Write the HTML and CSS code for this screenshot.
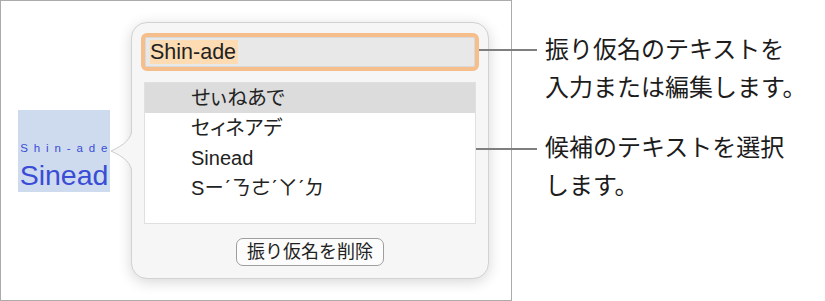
FILE: index.html
```html
<!DOCTYPE html>
<html lang="ja">
<head>
    <meta charset="UTF-8">
    <meta name="viewport" content="width=device-width, initial-scale=1.0">
    <title>振り仮名</title>
    <link rel="stylesheet" href="styles.css">
</head>
<body>
    <div class="page">
        <div class="doc">
            <div class="word">
                <span class="ruby">Shin-ade</span>
                <span class="base">Sinead</span>
            </div>
            <div class="popover">
                <svg class="arrow" width="22" height="46" viewBox="0 0 22 46">
                    <path d="M22 0 C22 11 14 17 1 23 C14 29 22 35 22 46 Z" fill="#f6f6f6"/>
                    <path d="M22 0 C22 11 14 17 1 23 C14 29 22 35 22 46" fill="none" stroke="#cdcdcd" stroke-width="1"/>
                </svg>
                <div class="field"><span class="sel">Shin-ade</span></div>
                <ul class="list">
                    <li class="active">せぃねあで</li>
                    <li>セィネアデ</li>
                    <li>Sinead</li>
                    <li>Sㄧˊㄋㄜˊㄚˊㄉ</li>
                </ul>
                <div class="actions">
                    <button>振り仮名を削除</button>
                </div>
            </div>
        </div>
        <div class="notes">
            <p>振り仮名のテキストを<br>入力または編集します。</p>
            <p>候補のテキストを選択<br>します。</p>
        </div>
        <div class="line line-1"></div>
        <div class="line line-2"></div>
    </div>
</body>
</html>
```

FILE: styles.css
```css
body {
    margin: 0;
    background: #fff;
    font-family: "Liberation Sans", "Noto Sans CJK JP", "Noto Sans CJK TC", sans-serif;
    color: #1e1e1e;
}
.page {
    position: relative;
    display: flex;
    width: 825px;
    height: 301px;
}
.doc {
    width: 512px;
    height: 301px;
    box-sizing: border-box;
    border: 1px solid #ababab;
    display: flex;
    align-items: center;
    padding-left: 17px;
    gap: 21px;
}
.word {
    width: 92px;
    height: 82px;
    background-color: #cedbee;
    display: flex;
    flex-direction: column;
    align-items: center;
    justify-content: flex-end;
    padding-bottom: 1px;
    box-sizing: border-box;
    gap: 4px;
    color: #3a4cd6;
}
.ruby {
    font-size: 11.5px;
    line-height: 14px;
    letter-spacing: 5.9px;
    margin-right: -5.5px;
}
.base {
    font-size: 28.5px;
    line-height: 32px;
}
.popover {
    position: relative;
    width: 358px;
    box-sizing: border-box;
    padding: 10px 9px 12px;
    background-color: #f6f6f6;
    border: 1px solid #d2d2d2;
    border-radius: 16px;
    box-shadow: 0 3px 14px rgba(0, 0, 0, 0.16);
}
.arrow {
    position: absolute;
    left: -22px;
    top: 105px;
}
.field {
    height: 38px;
    box-sizing: border-box;
    border: 4px solid #f5be8b;
    border-radius: 6px;
    background-color: #e8e8e8;
    box-shadow: inset 0 0 0 1px #d9d9d9;
    padding: 3px 5px;
    font-size: 21.5px;
    line-height: 24px;
    color: #222;
}
.sel {
    display: inline-block;
    background-color: #fddcb3;
    padding-right: 2px;
}
.list {
    list-style: none;
    margin: 11px 3px 0;
    padding: 0;
    height: 142px;
    box-sizing: border-box;
    border: 1px solid #e0e0e0;
    background-color: #fff;
}
.list li {
    height: 30px;
    line-height: 30px;
    padding-left: 46px;
    font-size: 20px;
    font-feature-settings: "palt";
    color: #222;
}
.list li.active {
    background-color: #dcdcdc;
}
.actions {
    display: flex;
    justify-content: center;
    margin-top: 14px;
}
button {
    height: 28px;
    padding: 0 10px;
    border: 1px solid #9e9e9e;
    border-radius: 7px;
    background-color: #fcfcfc;
    font-family: inherit;
    font-size: 18px;
    line-height: 26px;
    color: #222;
}
.notes {
    margin-left: 33px;
    padding-top: 31px;
    font-size: 24px;
    line-height: 38px;
    white-space: nowrap;
    color: #1c1c1c;
}
.notes p {
    margin: 0 0 22px;
}
.line {
    position: absolute;
    height: 2px;
    background-color: #7f7f7f;
}
.line-1 {
    left: 479px;
    top: 49px;
    width: 58px;
}
.line-2 {
    left: 476px;
    top: 148px;
    width: 61px;
}
```
